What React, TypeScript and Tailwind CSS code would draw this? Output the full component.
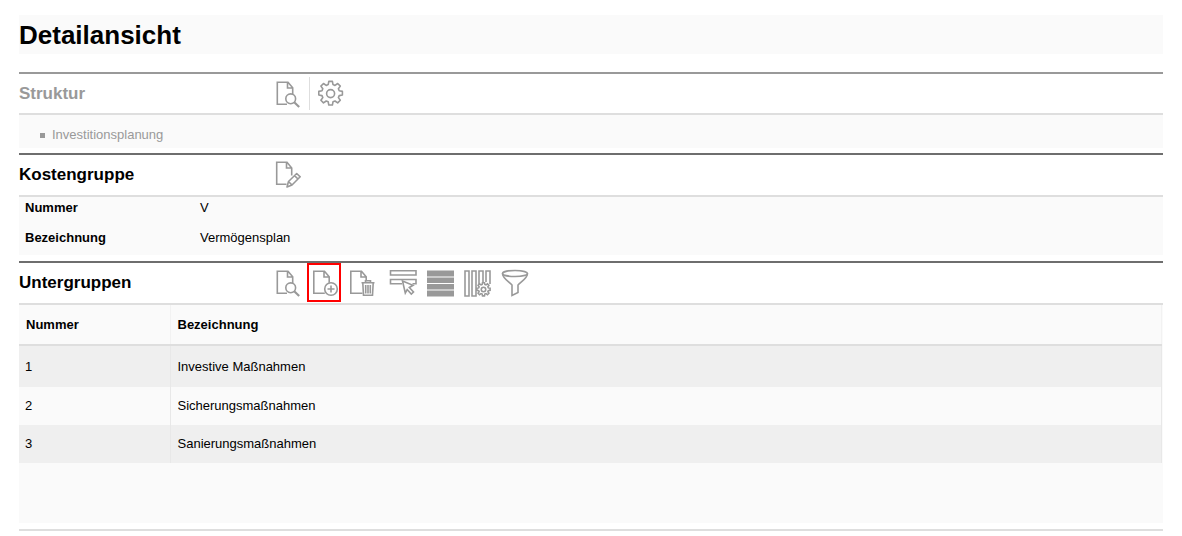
import type { ReactNode } from "react";

function Icon({ children }: { children: ReactNode }) {
  return (
    <svg width="37" height="32" viewBox="0 -1 37 32" fill="none" stroke="#999" strokeWidth="1.6" aria-hidden="true">
      {children}
    </svg>
  );
}

function ToolButton({ label, children, marked = false }: { label: string; children: ReactNode; marked?: boolean }) {
  return (
    <button type="button" title={label} aria-label={label} className="relative flex h-full w-[37px] items-center">
      <Icon>{children}</Icon>
      {marked && <span className="absolute -left-px top-0 h-[39px] w-[34px] border-2 border-[#f00]" />}
    </button>
  );
}

const searchDoc = (
  <>
    <path d="M16 25.3H6.3V3.3H17L21.7 8.7V15M16.5 3.3V9H21.7" />
    <circle cx="19.7" cy="19.8" r="4.9" />
    <path d="M23.2 23.2L28.2 28" strokeWidth="2.2" />
  </>
);

const gear = "M-1.8-12.2h3.6l.6 3.2 2 .8 2.7-1.9 2.6 2.6-1.9 2.7.8 2 3.2.6v3.6l-3.2.6-.8 2 1.9 2.7-2.6 2.6-2.7-1.9-2 .8-.6 3.2h-3.6l-.6-3.2-2-.8-2.7 1.9-2.6-2.6 1.9-2.7-.8-2-3.2-.6v-3.6l3.2-.6.8-2-1.9-2.7 2.6-2.6 2.7 1.9 2-.8z";

function SectionHeader({ title, muted = false, children }: { title: string; muted?: boolean; children: ReactNode }) {
  return (
    <div className={muted ? "flex h-[43px] items-center border-y-2 border-t-[#999] border-b-[#dedede] text-[#999]" : "flex h-[44px] items-center border-y-2 border-t-[#6e6e6e] border-b-[#dedede]"}>
      <h2 className="w-[252px] shrink-0 text-[17px] leading-5 font-bold">{title}</h2>
      <div className="flex h-full items-center">{children}</div>
    </div>
  );
}

const groups = [
  { nr: 1, name: "Investive Maßnahmen" },
  { nr: 2, name: "Sicherungsmaßnahmen" },
  { nr: 3, name: "Sanierungsmaßnahmen" },
];

export default function App() {
  return (
    <main className="bg-white px-[19px] pt-[15px] font-['Liberation_Sans',Arial,sans-serif] text-[13px] leading-4 text-black">
      <h1 className="bg-[#fafafa] pt-[2px] text-[26px] leading-[37px] font-bold">Detailansicht</h1>

      <section className="mt-[18px]">
        <SectionHeader title="Struktur" muted>
          <ToolButton label="Struktur anzeigen">{searchDoc}</ToolButton>
          <div className="ml-px h-[33px] border-l border-[#dedede]" />
          <ToolButton label="Einstellungen">
            <g transform="translate(20.6 14.6)">
              <path d={gear} strokeLinejoin="round" />
              <circle r="4" />
            </g>
          </ToolButton>
        </SectionHeader>
        <ul className="bg-[#fafafa] pt-3 pb-[5px] pl-[21px] text-[#999]">
          <li className="flex items-center gap-[7px]">
            <span className="size-[5px] bg-[#999]" />
            Investitionsplanung
          </li>
        </ul>
      </section>

      <section className="mt-[5px]">
        <SectionHeader title="Kostengruppe">
          <ToolButton label="Kostengruppe bearbeiten">
            <path d="M15.5 24.3H5.7V2.3H16L20.7 8V15.5M15.5 2.3V8H20.7" />
            <path d="M16 27L17.5 21.5L25.7 13.5L29.2 16.8L21 25L16 27ZM23.5 15.7L27 19M17.5 21.5L21 25" strokeLinejoin="round" />
          </ToolButton>
        </SectionHeader>
        <dl className="grid grid-cols-[175px_1fr] gap-y-[14px] bg-[#fafafa] px-[6px] pt-[3px] pb-[9px]">
          <dt className="font-bold">Nummer</dt>
          <dd>V</dd>
          <dt className="font-bold">Bezeichnung</dt>
          <dd>Vermögensplan</dd>
        </dl>
      </section>

      <section className="mt-[6px] border-b-2 border-[#dedede] pb-[6px]">
        <SectionHeader title="Untergruppen">
          <ToolButton label="Untergruppe anzeigen">{searchDoc}</ToolButton>
          <ToolButton label="Untergruppe anlegen" marked>
            <path d="M16.8 25.3H5.8V3.3H16.5L21.2 8.7V14.7M16 3.3V9H21.2" />
            <circle cx="23" cy="21" r="6.3" />
            <path d="M19.5 21H26.5M23 17.5V24.5" />
          </ToolButton>
          <ToolButton label="Untergruppe löschen">
            <path d="M17.5 25.3H5.8V3.3H16.5L21.2 8.7V12M16 3.3V9H21.2" />
            <path d="M16.5 14.8H29.5M20.5 14.5V12.8H25.5V14.5M17.8 15L18.5 27.2H27.5L28.2 15M20.7 17V25.5M23 17V25.5M25.3 17V25.5" />
          </ToolButton>
          <ToolButton label="Zeile auswählen">
            <path d="M8.5 2.8H34V7H8.5ZM20 15.8H8.5V11.5H34V15.8H30.5" />
            <path d="M20.5 13L31 17.3L27.3 19.5L31.5 24L29.3 26L25.2 21.5L23.3 25Z" />
          </ToolButton>
          <ToolButton label="Alle auswählen">
            <path d="M8 2.5H35V8.5H8ZM8 9.5H35V15H8ZM8 16H35V21.5H8ZM8 22.5H35V28.5H8Z" fill="#999" stroke="none" />
          </ToolButton>
          <ToolButton label="Spalten einstellen">
            <path d="M9 3H13V28H9ZM16 3H20V28H16ZM23 16V3H27V14M30 14V3H34V16" />
            <g transform="translate(27.5 21.5) scale(.56)">
              <path d={gear} strokeWidth="2.8" />
              <circle r="4" strokeWidth="2.8" />
            </g>
          </ToolButton>
          <ToolButton label="Filtern">
            <ellipse cx="22" cy="5.5" rx="12.5" ry="3" />
            <path d="M9.5 5.5C9.5 10 15 13 19 17V27.5L25 24.5V17C29 13 34.5 10 34.5 5.5" />
          </ToolButton>
        </SectionHeader>
        <div className="min-h-[218px] bg-[#fafafa] pr-px">
          <table className="w-full border-collapse text-left">
            <thead>
              <tr className="h-[40px] border-b-2 border-[#dedede]">
                <th className="w-[151px] border-r border-[#f2f2f2] px-[7px]">Nummer</th>
                <th className="border-r border-[#f2f2f2] px-[7px]">Bezeichnung</th>
              </tr>
            </thead>
            <tbody>
              {groups.map((group) => (
                <tr key={group.nr} className="h-[38px] odd:bg-[#efefef] first:h-[42px]">
                  <td className="border-r border-[#e8e8e8] px-[6px]">{group.nr}</td>
                  <td className="border-r border-[#e8e8e8] px-[7px]">{group.name}</td>
                </tr>
              ))}
            </tbody>
          </table>
        </div>
      </section>
    </main>
  );
}
